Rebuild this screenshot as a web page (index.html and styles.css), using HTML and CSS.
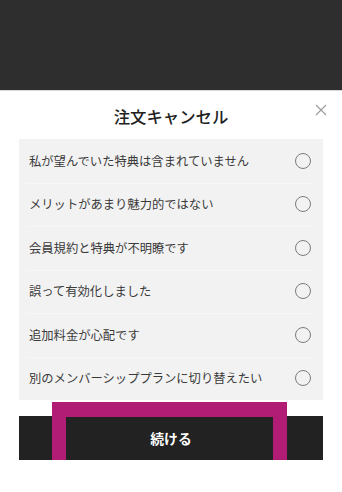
FILE: index.html
```html
<!DOCTYPE html>
<html>
<head>
    <link rel="stylesheet" href="styles.css">
</head>
<body>
    <div class="backdrop"></div>

    <div class="sheet">
        <div class="sheet-header">
            <h1 class="title">注文キャンセル</h1>
            <div class="close">
                <svg width="12" height="12" viewBox="0 0 12 12">
                    <path d="M1 1 L11 11 M11 1 L1 11" stroke="#9a9a9a" stroke-width="1.1" fill="none"/>
                </svg>
            </div>
        </div>

        <ul class="reasons">
            <li class="reason"><span>私が望んでいた特典は含まれていません</span><span class="radio"></span></li>
            <li class="reason"><span>メリットがあまり魅力的ではない</span><span class="radio"></span></li>
            <li class="reason"><span>会員規約と特典が不明瞭です</span><span class="radio"></span></li>
            <li class="reason"><span>誤って有効化しました</span><span class="radio"></span></li>
            <li class="reason"><span>追加料金が心配です</span><span class="radio"></span></li>
            <li class="reason"><span>別のメンバーシッププランに切り替えたい</span><span class="radio"></span></li>
        </ul>

        <div class="continue">
            続ける
            <div class="highlight"></div>
        </div>
    </div>
</body>
</html>
```

FILE: styles.css
```css
body {
    margin: 0;
    background: #fff;
    font-family: "Noto Sans CJK JP", "Noto Sans", sans-serif;
    overflow: hidden;
}

.backdrop {
    height: 90px;
    background: #2e2e2e;
    border-bottom: 1px solid #d8d8d8;
}

.sheet {
    padding: 0 19px;
}

.sheet-header {
    position: relative;
    padding-top: 13px;
    margin-bottom: 11px;
}

.title {
    margin: 0;
    text-align: center;
    font-size: 16.4px;
    font-weight: 500;
    line-height: 24px;
    color: #222;
}

.close {
    position: absolute;
    right: -4px;
    top: 13px;
    width: 12px;
    height: 12px;
}

.close svg {
    display: block;
}

.reasons {
    list-style: none;
    margin: 0;
    padding: 0;
    background: #f2f2f2;
}

.reason {
    display: flex;
    align-items: center;
    justify-content: space-between;
    height: 43.5px;
    padding: 0 12px 0 10px;
    font-size: 12.3px;
    color: #3a3a3a;
    position: relative;
}

.reason + .reason::before {
    content: "";
    position: absolute;
    top: 0;
    left: 8px;
    right: 10px;
    border-top: 1px solid #f7f7f7;
}

.radio {
    width: 14px;
    height: 14px;
    border: 1.6px solid #7c7c7c;
    border-radius: 50%;
}

.continue {
    position: relative;
    margin-top: 16px;
    height: 44px;
    line-height: 44px;
    background: #222;
    color: #fff;
    text-align: center;
    font-size: 13.8px;
    font-weight: 700;
}

.highlight {
    position: absolute;
    left: 33px;
    top: -14px;
    width: 235px;
    height: 73px;
    box-sizing: border-box;
    border: 14px solid #b11c75;
    border-top-width: 15px;
}
```
